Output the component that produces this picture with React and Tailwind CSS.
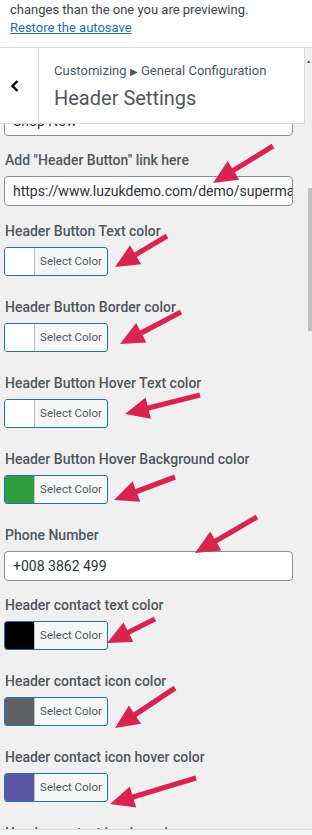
import React from 'react';

const arrows = [
  [273, 146, 213, 183],
  [167, 236, 115, 267],
  [181, 312, 120, 344],
  [200, 395, 125, 414],
  [175, 477, 114, 500],
  [257, 517, 195, 553],
  [155, 619, 107, 643],
  [175, 688, 115, 728],
  [196, 778, 110, 804],
];

function arrowPoints([tx, ty, px, py]) {
  const len = Math.hypot(px - tx, py - ty);
  const dx = (px - tx) / len;
  const dy = (py - ty) / len;
  const nx = -dy;
  const ny = dx;
  const head = 24;
  const hw = 11;
  const sw = 2.6;
  const bx = px - dx * head;
  const by = py - dy * head;
  const pts = [
    [tx + nx * sw, ty + ny * sw],
    [bx + nx * sw, by + ny * sw],
    [bx + nx * hw, by + ny * hw],
    [px, py],
    [bx - nx * hw, by - ny * hw],
    [bx - nx * sw, by - ny * sw],
    [tx - nx * sw, ty - ny * sw],
  ];
  return pts.map((p) => p.map((v) => v.toFixed(1)).join(',')).join(' ');
}

function Label({ children }) {
  return (
    <div className="text-[14px] leading-5 font-medium text-[#50575e] pl-[5px] mb-[6px] whitespace-nowrap">
      {children}
    </div>
  );
}

function TextInput({ value }) {
  return (
    <div className="h-[30px] w-[289px] ml-[4px] shrink-0 bg-white border border-[#8c8f94] rounded-[4px] flex items-center pl-[8px] overflow-hidden">
      <span className="text-[14px] text-[#2c3338] whitespace-nowrap">{value}</span>
    </div>
  );
}

function ColorButton({ color }) {
  return (
    <div className="h-[29px] w-[104px] ml-[4px] flex border border-[#2271b1] rounded-[3px] overflow-hidden bg-[#f6f7f7]">
      <div className="w-[30px] border-r border-[#c3c4c7]" style={{ background: color }} />
      <div className="flex-1 flex items-center justify-center text-[11.5px] text-[#50575e]">Select Color</div>
    </div>
  );
}

const colorRows = [
  { label: 'Header Button Text color', color: '#ffffff' },
  { label: 'Header Button Border color', color: '#ffffff' },
  { label: 'Header Button Hover Text color', color: '#ffffff' },
  { label: 'Header Button Hover Background color', color: '#2e9d3a' },
];

const contactRows = [
  { label: 'Header contact text color', color: '#000000' },
  { label: 'Header contact icon color', color: '#606165' },
  { label: 'Header contact icon hover color', color: '#5b56a6' },
];

export default function App() {
  return (
    <div className="relative w-[312px] h-[835px] overflow-hidden bg-[#f0f0f0] font-[Roboto,sans-serif] flex flex-col">
      {/* autosave notice */}
      <div className="h-[48px] bg-white border-b border-[#dcdcde] px-[10px] pt-[1px] shrink-0">
        <div className="text-[13px] leading-[18px] text-[#3c434a]">changes than the one you are previewing.</div>
        <div className="text-[13px] leading-[18px] text-[#2271b1] underline">Restore the autosave</div>
      </div>

      <div className="flex flex-1 min-h-0">
        <div className="w-[305px] flex flex-col">
          {/* section header */}
          <div className="h-[76px] bg-white border-b border-r border-[#dcdcde] flex shrink-0">
            <div className="w-[39px] border-r border-[#dcdcde] flex items-center pl-[10px]">
              <svg width="10" height="14" viewBox="0 0 10 14">
                <polyline points="7.5,2 2.5,7 7.5,12" fill="none" stroke="#000" strokeWidth="2.4" />
              </svg>
            </div>
            <div className="pl-[15px] pt-[14px]">
              <div className="text-[13px] leading-[18px] text-[#50575e] whitespace-nowrap">
                Customizing <span className="text-[10px]">▶</span> General Configuration
              </div>
              <div className="text-[20px] leading-[28px] text-[#50575e] mt-[3px]">Header Settings</div>
            </div>
          </div>

          {/* scrolled controls */}
          <div className="flex-1 min-h-0 overflow-hidden">
            <div className="h-[12px] overflow-hidden flex flex-col justify-end">
              <TextInput value="Shop Now" />
            </div>

            <div className="mt-[14px]">
              <Label>Add "Header Button" link here</Label>
              <TextInput value="https://www.luzukdemo.com/demo/supermarket" />
            </div>

            <div className="mt-[15px]">
              {colorRows.map((r) => (
                <div key={r.label} className="mb-[21px]">
                  <Label>{r.label}</Label>
                  <ColorButton color={r.color} />
                </div>
              ))}
            </div>

            <div>
              <Label>Phone Number</Label>
              <TextInput value="+008 3862 499" />
            </div>

            <div className="mt-[14px]">
              {contactRows.map((r) => (
                <div key={r.label} className="mb-[21px]">
                  <Label>{r.label}</Label>
                  <ColorButton color={r.color} />
                </div>
              ))}
              <Label>Header contact border color</Label>
            </div>
          </div>
        </div>

        {/* scrollbar */}
        <div className="w-[7px] flex flex-col items-end">
          <div className="w-[7px] h-[16px] flex items-end justify-center text-[5px] leading-none text-[#505050]">▲</div>
          <div className="w-[4px] h-[143px] mt-[124px] bg-[#c1c1c1]" />
        </div>
      </div>

      <div className="h-[6px] shrink-0 bg-[#f6f7f7] border-t border-[#dcdcde]" />

      <svg className="absolute inset-0 pointer-events-none" width="312" height="835">
        {arrows.map((a, i) => (
          <polygon key={i} points={arrowPoints(a)} fill="#da2450" />
        ))}
      </svg>
    </div>
  );
}
